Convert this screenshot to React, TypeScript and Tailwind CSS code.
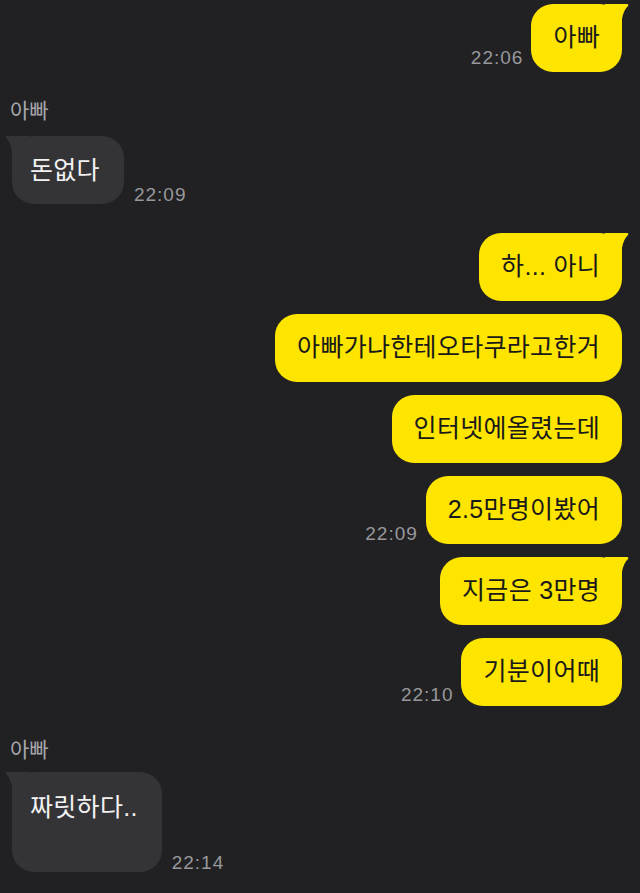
const font = "font-['Liberation_Sans','Noto_Sans_CJK_KR',sans-serif]";

function TailRight() {
  return (
    <svg className="absolute top-0 right-[-7px]" width="24" height="26" viewBox="0 0 24 26">
      <path d="M0 0 L22 0 Q24 0.2 23 2 Q18.5 6 17 15 L17 26 L0 26 Z" fill="#fee500" />
    </svg>
  );
}

function TailLeft() {
  return (
    <svg className="absolute top-0 left-[-7px]" width="24" height="26" viewBox="0 0 24 26">
      <path d="M24 0 L2 0 Q0 0.2 1 2 Q5.5 6 7 15 L7 26 L24 26 Z" fill="#343437" />
    </svg>
  );
}

function Time({ t, className = "" }: { t: string; className?: string }) {
  return (
    <span className={`text-[19px] leading-[19px] tracking-[1px] text-[#98989c] ${className}`}>{t}</span>
  );
}

function Sent({ text, time, tail, timeClass }: { text: string; time?: string; tail?: boolean; timeClass?: string }) {
  return (
    <div className="flex items-end justify-end gap-[8px] pr-[18px]">
      {time && <Time t={time} className={timeClass} />}
      <div className="relative flex h-[68px] items-center rounded-[22px] bg-[#fee500] px-[22px] text-[25px] tracking-[0.3px] text-[#191919]">
        {tail && <TailRight />}
        <span className="relative">{text}</span>
      </div>
    </div>
  );
}

function Received({ text, time, tall }: { text: string; time: string; tall?: boolean }) {
  return (
    <div className="flex items-end gap-[10px] pl-[12px]">
      <div
        className={`relative rounded-[22px] bg-[#343437] pl-[18px] pr-[24px] text-[25px] tracking-[0.3px] text-[#f2f2f2] ${
          tall ? "h-[100px] pt-[17px]" : "flex h-[68px] items-center"
        }`}
      >
        <TailLeft />
        <span className="relative leading-[34px]">{text}</span>
      </div>
      <Time t={time} />
    </div>
  );
}

function Name() {
  return <div className="pl-[10px] text-[21px] leading-[28px] text-[#a6a6aa]">아빠</div>;
}

export default function App() {
  return (
    <div className={`h-[893px] w-[640px] overflow-hidden bg-[#212123] pt-[4px] ${font}`}>
      <Sent text="아빠" time="22:06" tail timeClass="mb-[5px]" />

      <div className="mt-[25px]">
        <Name />
      </div>
      <div className="mt-[11px]">
        <Received text="돈없다" time="22:09" />
      </div>

      <div className="mt-[29px] flex flex-col gap-[13px]">
        <Sent text="하... 아니" tail />
        <Sent text="아빠가나한테오타쿠라고한거" />
        <Sent text="인터넷에올렸는데" />
        <Sent text="2.5만명이봤어" time="22:09" timeClass="mb-[1px]" />
        <Sent text="지금은 3만명" tail />
        <Sent text="기분이어때" time="22:10" timeClass="mb-[2px]" />
      </div>

      <div className="mt-[30px]">
        <Name />
      </div>
      <div className="mt-[8px]">
        <Received text="짜릿하다.." time="22:14" tall />
      </div>
    </div>
  );
}
